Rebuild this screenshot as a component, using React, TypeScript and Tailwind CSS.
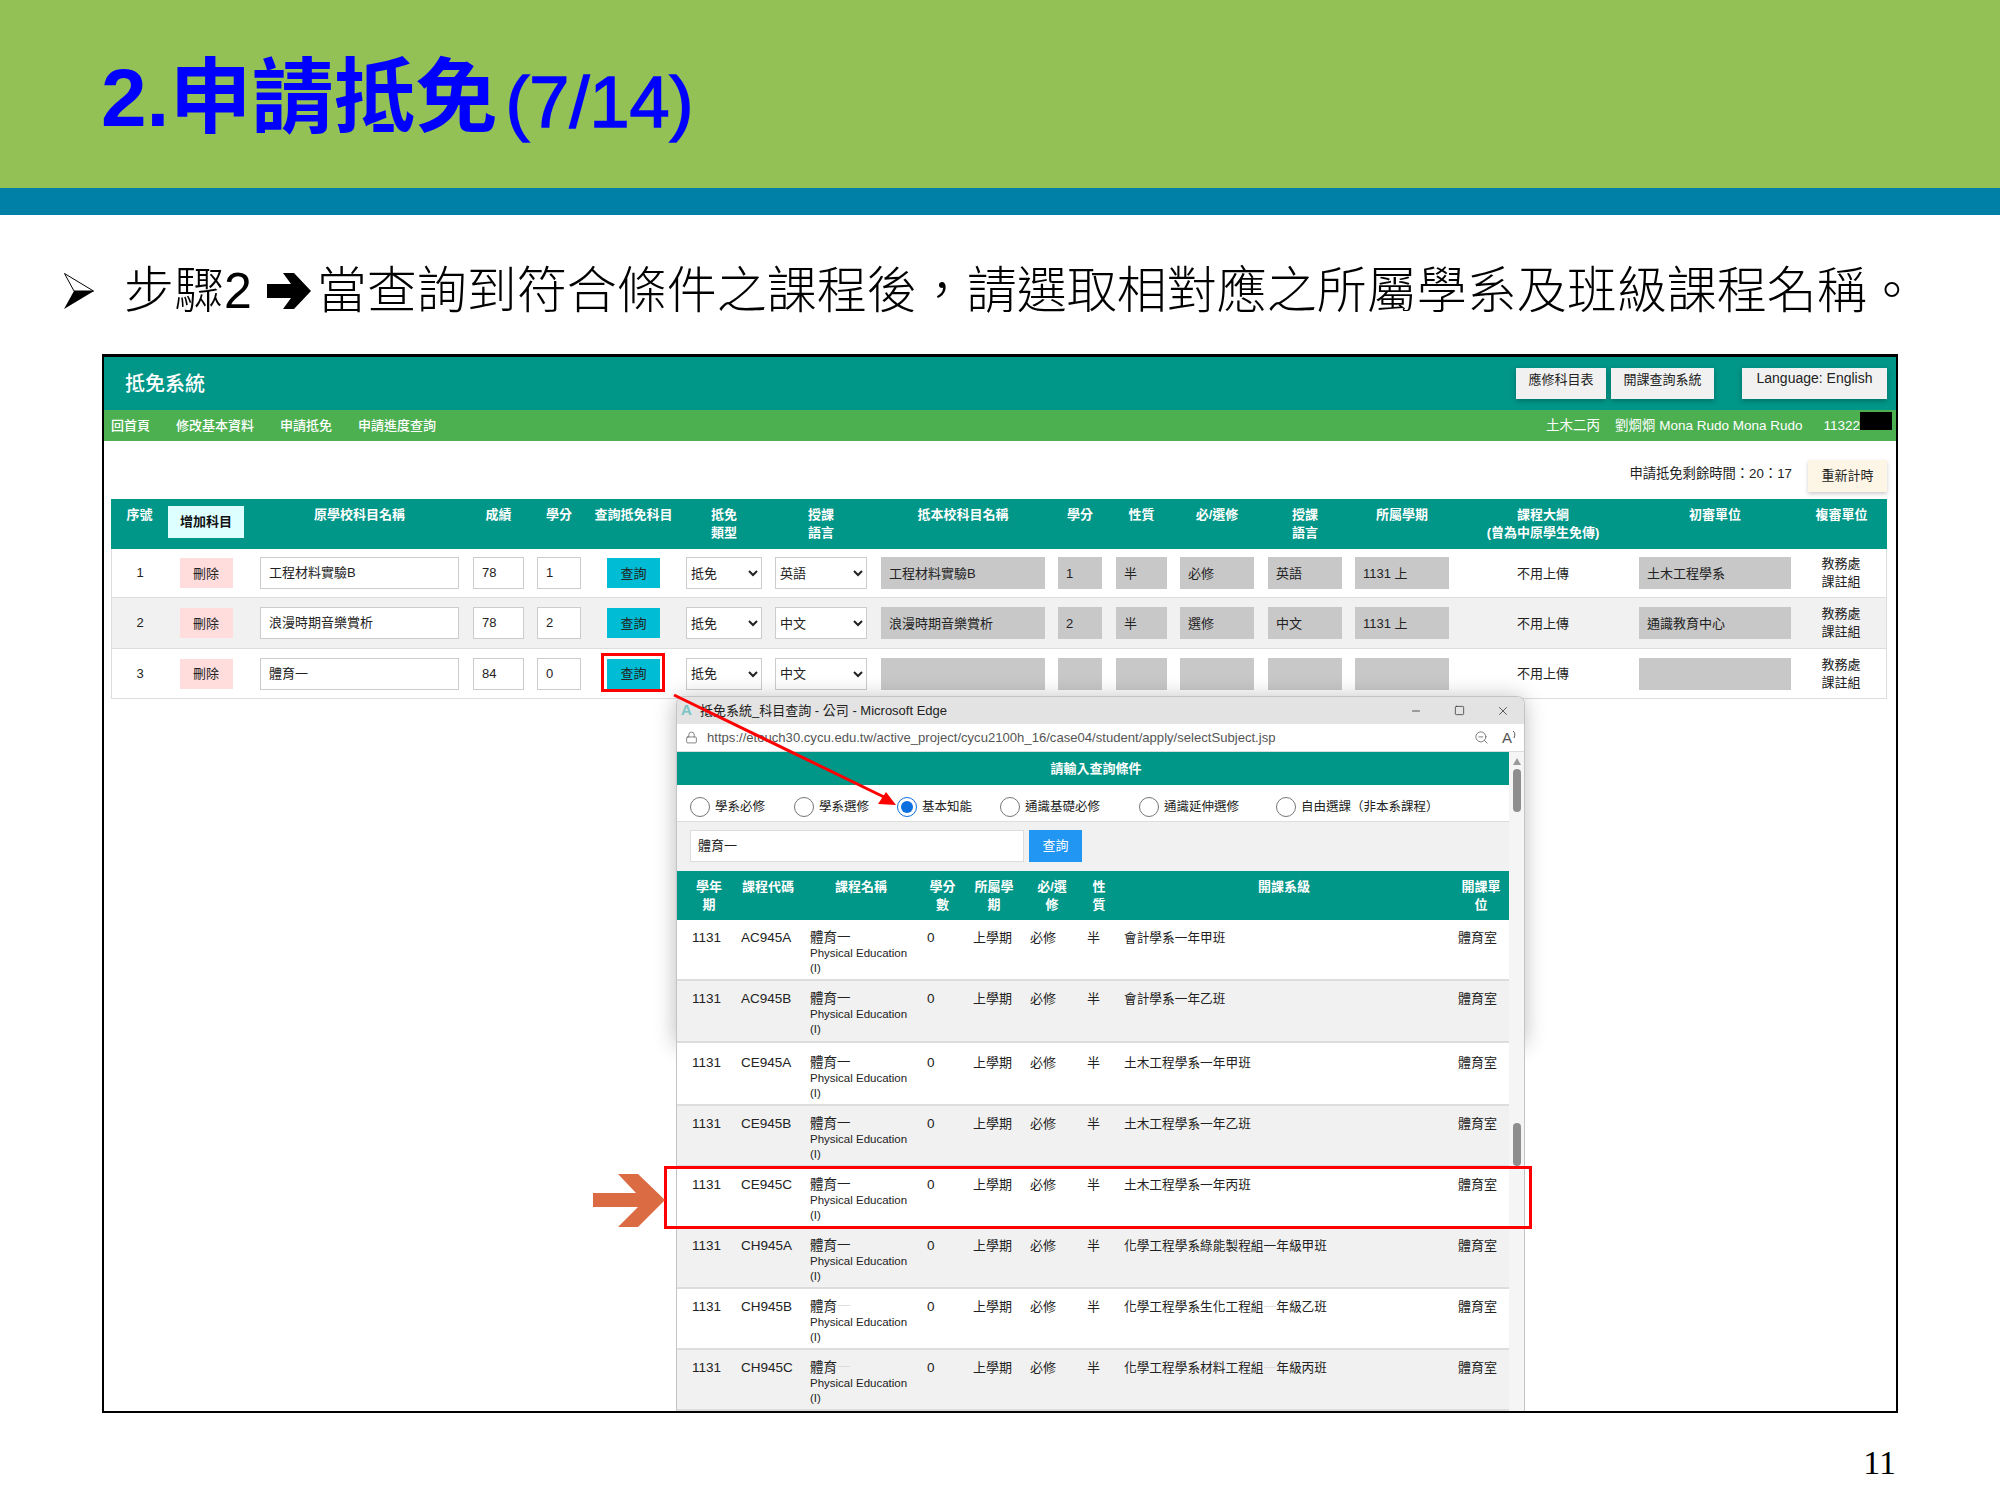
import { Minus, Square, X, ZoomOut, Lock } from "lucide-react";

const COLS = "grid grid-cols-[57px_84px_215px_63px_58px_91px_90px_104px_180px_54px_69px_82px_94px_100px_182px_162px_91px]";
const ROWCOLS = "grid grid-cols-[56px_84px_215px_63px_58px_91px_90px_104px_180px_54px_69px_82px_94px_100px_182px_162px_90px]";
const POP = "grid grid-cols-[34px_54px_102px_31px_42px_44px_20px_320px_44px] gap-x-[15px] pl-[15px]";

const mainRows = [
  { n: "1", name: "工程材料實驗B", score: "78", cr: "1", lang: "英語", sub: "工程材料實驗B", c2: "1", t: "半", m: "必修", l2: "英語", term: "1131 上", dept: "土木工程學系", rowCls: "h-[49px] bg-white" },
  { n: "2", name: "浪漫時期音樂賞析", score: "78", cr: "2", lang: "中文", sub: "浪漫時期音樂賞析", c2: "2", t: "半", m: "選修", l2: "中文", term: "1131 上", dept: "通識教育中心", rowCls: "h-[51px] bg-[#f1f1f1]" },
  { n: "3", name: "體育一", score: "84", cr: "0", lang: "中文", sub: "", c2: "", t: "", m: "", l2: "", term: "", dept: "", rowCls: "h-[50px] bg-white" },
];

const popRows = [
  { code: "AC945A", dept: "會計學系一年甲班", cls: "h-[61px] bg-white", hide: false },
  { code: "AC945B", dept: "會計學系一年乙班", cls: "h-[62px] bg-[#f1f1f1]", hide: false },
  { code: "CE945A", dept: "土木工程學系一年甲班", cls: "h-[63px] bg-white pt-[2px]", hide: false },
  { code: "CE945B", dept: "土木工程學系一年乙班", cls: "h-[61px] bg-[#f1f1f1]", hide: false },
  { code: "CE945C", dept: "土木工程學系一年丙班", cls: "h-[61px] bg-white", hide: false },
  { code: "CH945A", dept: "化學工程學系綠能製程組一年級甲班", cls: "h-[61px] bg-[#f1f1f1]", hide: false },
  { code: "CH945B", dept: "化學工程學系生化工程組", dept2: "年級乙班", cls: "h-[61px] bg-white", hide: true },
  { code: "CH945C", dept: "化學工程學系材料工程組", dept2: "年級丙班", cls: "h-[61px] bg-[#f1f1f1]", hide: true },
];

function Grey({ w, children }: { w: string; children?: React.ReactNode }) {
  return <div className={`${w} mx-auto h-[32px] bg-[#c8c8c8] flex items-center pl-[8px] pt-[1px] text-[13px] text-[#222]`}>{children}</div>;
}

function Head({ children }: { children: React.ReactNode }) {
  return <div className="text-center font-bold text-white text-[13px] leading-[18px] pt-[7px]">{children}</div>;
}

export default function App() {
  return (
    <div className="relative w-[2000px] h-[1500px] overflow-hidden bg-white font-['Liberation_Sans','Noto_Sans_CJK_TC',sans-serif]">
      <header className="h-[188px] bg-[#94c155] flex items-start pl-[101px] pt-[49px] text-[#0000ff] font-bold whitespace-nowrap">
        <span className="text-[82px] leading-[98px]">2.申請抵免</span>
        <span className="ml-[8px] text-[72px] leading-[98px] font-normal relative top-[4px] [-webkit-text-stroke:1.5px_#0000ff]">(7/14)</span>
      </header>
      <div className="h-[27px] bg-[#0080a6]" />

      <div className="h-[139px] flex items-center pl-[64px] pt-[13px] whitespace-nowrap text-black">
        <svg width="30" height="36" viewBox="0 0 30 36" className="shrink-0">
          <path d="M0.5 0.5 L29.5 18 L10 18 Z" fill="#fff" stroke="#000" strokeWidth="1" />
          <path d="M0 36 L30 18 L10 18 Z" fill="#000" />
        </svg>
        <span className="ml-[30px] text-[50px] leading-[60px] font-light">步驟2</span>
        <svg width="44" height="36" viewBox="0 0 44 36" className="ml-[15px] shrink-0">
          <path d="M0 11 H24 L16 0 H27 L44 18 L27 36 H16 L24 25 H0 Z" fill="#000" />
        </svg>
        <span className="ml-[6px] text-[50px] leading-[60px] font-light">當查詢到符合條件之課程後，請選取相對應之所屬學系及班級課程名稱。</span>
      </div>

      <section className="relative ml-[102px] w-[1796px] h-[1059px] border-t-[3px] border-x-2 border-b-2 border-black overflow-hidden bg-white">
        <div className="h-[53px] bg-[#009688] flex items-center justify-between pl-[21px] pr-[9px]">
          <span className="text-white text-[20px] font-medium">抵免系統</span>
          <div className="flex items-center text-[13px] text-[#222]">
            <div className="w-[90px] h-[31px] pb-[8px] bg-[#f1f1f1] flex items-center justify-center shadow-[0_2px_5px_rgba(0,0,0,0.25)]">應修科目表</div>
            <div className="ml-[5px] w-[103px] h-[31px] pb-[8px] bg-[#f1f1f1] flex items-center justify-center shadow-[0_2px_5px_rgba(0,0,0,0.25)]">開課查詢系統</div>
            <div className="ml-[28px] w-[145px] h-[31px] pb-[10px] bg-[#f1f1f1] flex items-center justify-center text-[14px] shadow-[0_2px_5px_rgba(0,0,0,0.25)]">Language: English</div>
          </div>
        </div>
        <nav className="h-[31px] bg-[#4caf50] flex items-center justify-between pl-[7px] text-white text-[13px] whitespace-nowrap">
          <div className="flex gap-x-[26px] font-medium">
            <span>回首頁</span><span>修改基本資料</span><span>申請抵免</span><span>申請進度查詢</span>
          </div>
          <div className="flex w-[350px] text-[13.5px] pt-[1px]">
            <span>土木二丙</span>
            <span className="ml-[15px]">劉烱烱 Mona Rudo Mona Rudo</span>
            <span className="ml-[21px]">11322</span>
          </div>
        </nav>
        <div className="absolute left-[1756px] top-[55px] w-[32px] h-[18px] bg-black" />

        <div className="h-[58px] flex items-start justify-end pr-[9px] pt-[19px] text-[13.3px] text-[#222]">
          <span className="leading-[28px]">申請抵免剩餘時間：20：17</span>
          <div className="ml-[16px] w-[79px] h-[32px] bg-[#fdf5e6] flex items-center justify-center text-[13px] shadow-[0_2px_4px_rgba(0,0,0,0.2)]">重新計時</div>
        </div>

        <div className="ml-[7px] w-[1776px]">
          <div className={`${COLS} h-[50px] bg-[#009688]`}>
            <Head>序號</Head>
            <div className="pt-[7px] pr-[8px]"><div className="h-[32px] bg-[#ddffff] flex items-center justify-center text-[13px] font-bold text-[#111]">增加科目</div></div>
            <Head>原學校科目名稱</Head><Head>成績</Head><Head>學分</Head><Head>查詢抵免科目</Head>
            <Head>抵免<br />類型</Head><Head>授課<br />語言</Head><Head>抵本校科目名稱</Head><Head>學分</Head><Head>性質</Head><Head>必/選修</Head>
            <Head>授課<br />語言</Head><Head>所屬學期</Head><Head>課程大綱<br />(曾為中原學生免傳)</Head><Head>初審單位</Head><Head>複審單位</Head>
          </div>
          {mainRows.map((r) => (
            <div key={r.n} className={`${ROWCOLS} ${r.rowCls} items-center border-x border-b border-[#ddd] text-[13px] text-[#222]`}>
              <div className="text-center">{r.n}</div>
              <div className="pr-[8px]"><div className="w-[53px] h-[30px] mx-auto bg-[#ffdddd] flex items-center justify-center pt-[1px]">刪除</div></div>
              <div className="w-[199px] h-[32px] mx-auto bg-white border border-[#ccc] flex items-center pl-[8px]">{r.name}</div>
              <div className="w-[51px] h-[32px] mx-auto bg-white border border-[#ccc] flex items-center pl-[8px]">{r.score}</div>
              <div className="w-[44px] h-[32px] mx-auto bg-white border border-[#ccc] flex items-center pl-[8px]">{r.cr}</div>
              <div className="w-[53px] h-[30px] mx-auto bg-[#00bcd4] flex items-center justify-center pt-[1px]">查詢</div>
              <select defaultValue="抵免" className="w-[76px] h-[32px] mx-auto bg-white border border-[#ccc] text-[13px]"><option>抵免</option></select>
              <select defaultValue={r.lang} className="w-[92px] h-[32px] mx-auto bg-white border border-[#ccc] text-[13px]"><option>{r.lang}</option></select>
              <Grey w="w-[164px]">{r.sub}</Grey>
              <Grey w="w-[44px]">{r.c2}</Grey>
              <Grey w="w-[51px]">{r.t}</Grey>
              <Grey w="w-[74px]">{r.m}</Grey>
              <Grey w="w-[74px]">{r.l2}</Grey>
              <Grey w="w-[94px]">{r.term}</Grey>
              <div className="text-center pt-[1px]">不用上傳</div>
              <Grey w="w-[152px]">{r.dept}</Grey>
              <div className="text-center leading-[18px]">教務處<br />課註組</div>
            </div>
          ))}
        </div>

        <div className="absolute left-[572px] top-[339px] w-[848px] h-[347px] rounded-t-[8px] shadow-[0_2px_22px_rgba(0,0,0,0.28)]" />
        <div className="absolute left-[572px] top-[339px] w-[849px] h-[720px] bg-white border-x border-t border-[#c4c4c4] rounded-t-[8px] overflow-hidden text-[13px] text-[#222]">
          <div className="h-[27px] bg-[#e3e3e3] flex items-center whitespace-nowrap">
            <span className="ml-[4px] w-[19px] text-[15px] font-bold text-[#7cc4c4]">A</span>
            <span>抵免系統_科目查詢 - 公司 - Microsoft Edge</span>
            <Minus size={12} strokeWidth={1.5} className="ml-auto" />
            <Square size={11} strokeWidth={1.5} className="ml-[32px]" />
            <X size={14} strokeWidth={1.2} className="ml-[31px] mr-[14px]" />
          </div>
          <div className="h-[28px] bg-white flex items-center border-b border-[#ddd] text-[#555] whitespace-nowrap">
            <Lock size={13} strokeWidth={1.3} className="ml-[8px]" />
            <span className="ml-[9px] text-[13.1px]">https://etouch30.cycu.edu.tw/active_project/cycu2100h_16/case04/student/apply/selectSubject.jsp</span>
            <ZoomOut size={15} strokeWidth={1.2} className="ml-auto" />
            <span className="ml-[13px] mr-[7px] flex items-start">
              <span className="text-[15px] leading-none">A</span>
              <svg width="5" height="9" viewBox="0 0 5 9" fill="none" stroke="#555" strokeWidth="1"><path d="M1 1 Q4 3 2 8" /></svg>
            </span>
          </div>
          <div className="flex h-[660px]">
            <div className="w-[832px] shrink-0">
              <div className="h-[33px] bg-[#009688] flex items-center justify-center pl-[6px] pt-[1px] text-white font-bold">請輸入查詢條件</div>
              <div className="h-[37px] bg-white flex items-center pl-[13px] pt-[8px] text-[12.5px] border-b border-[#ddd] whitespace-nowrap">
                {[
                  ["學系必修", "w-[104px]", false],
                  ["學系選修", "w-[103px]", false],
                  ["基本知能", "w-[103px]", true],
                  ["通識基礎必修", "w-[139px]", false],
                  ["通識延伸選修", "w-[137px]", false],
                  ["自由選課（非本系課程）", "w-[200px]", false],
                ].map(([label, w, on]) => (
                  <label key={label as string} className={`${w} flex items-center gap-x-[5px]`}>
                    <input type="radio" name="kind" defaultChecked={on as boolean} className="w-[20px] h-[20px] m-0 accent-[#0b6fe0]" />
                    <span>{label}</span>
                  </label>
                ))}
              </div>
              <div className="h-[49px] bg-[#f1f1f1] flex items-start pl-[13px] pt-[8px]">
                <div className="w-[334px] h-[32px] bg-white border border-[#ddd] flex items-center pl-[7px]">體育一</div>
                <div className="ml-[5px] w-[53px] h-[32px] bg-[#2196f3] flex items-center justify-center text-white">查詢</div>
              </div>
              <div className={`${POP} h-[49px] bg-[#009688] text-white font-bold text-center leading-[18px] pt-[7px]`}>
                <div>學年<br />期</div>
                <div>課程代碼</div>
                <div>課程名稱</div>
                <div>學分<br />數</div>
                <div>所屬學<br />期</div>
                <div>必/選<br />修</div>
                <div>性<br />質</div>
                <div>開課系級</div>
                <div>開課單<br />位</div>
              </div>
              {popRows.map((r) => (
                <div key={r.code} className={`${POP} ${r.cls} border-b-2 border-[#ddd] text-[13.5px] leading-[16px] whitespace-nowrap`}>
                  <div className="pt-[10px]">1131</div>
                  <div className="pt-[10px]">{r.code}</div>
                  <div className="pt-[10px]">
                    <div>體育{r.hide ? <span className="text-[#ddd]">一</span> : "一"}</div>
                    <div className="text-[11.5px] leading-[15px]">Physical Education</div>
                    <div className="text-[11.5px] leading-[15px]">(I)</div>
                  </div>
                  <div className="pt-[10px]">0</div>
                  <div className="pt-[10px] text-[13px]">上學期</div>
                  <div className="pt-[10px] text-[13px]">必修</div>
                  <div className="pt-[10px] text-[13px] -ml-[2px]">半</div>
                  <div className="pt-[10px] text-[12.7px]">
                    {r.dept}
                    {r.dept2 ? <><span className="text-[#ddd]">一</span>{r.dept2}</> : null}
                  </div>
                  <div className="pt-[10px] text-[13px] -ml-[1px]">體育室</div>
                </div>
              ))}
            </div>
            <div className="w-[15px] bg-[#f5f5f5] relative">
              <svg className="absolute left-[4px] top-[6px]" width="8" height="7" viewBox="0 0 8 7"><path d="M4 0 L8 7 H0 Z" fill="#9a9a9a" /></svg>
              <div className="absolute left-[4px] top-[17px] w-[8px] h-[43px] rounded bg-[#8e8e8e]" />
              <div className="absolute left-[4px] top-[371px] w-[8px] h-[43px] rounded bg-[#8e8e8e]" />
            </div>
          </div>
        </div>
      </section>

      <div className="flex justify-end pr-[104px] mt-[30px] text-[34px] leading-[40px] text-black font-['Liberation_Serif',serif]">11</div>

      <div className="absolute left-[601px] top-[653px] w-[64px] h-[39px] border-[3px] border-[#ff0000]" />
      <div className="absolute left-[664px] top-[1166px] w-[868px] h-[63px] border-[3px] border-[#ff0000]" />
      <svg className="absolute left-0 top-0 pointer-events-none" width="2000" height="1500" viewBox="0 0 2000 1500">
        <line x1="674" y1="695" x2="884" y2="797" stroke="#ff0000" strokeWidth="3" />
        <path d="M896 805 L878 804 L886 792 Z" fill="#ff0000" />
        <path d="M593 1193 H636 L618 1174 H638 L665 1200 L638 1227 H618 L638 1207 H593 Z" fill="#db6b43" />
      </svg>
    </div>
  );
}
